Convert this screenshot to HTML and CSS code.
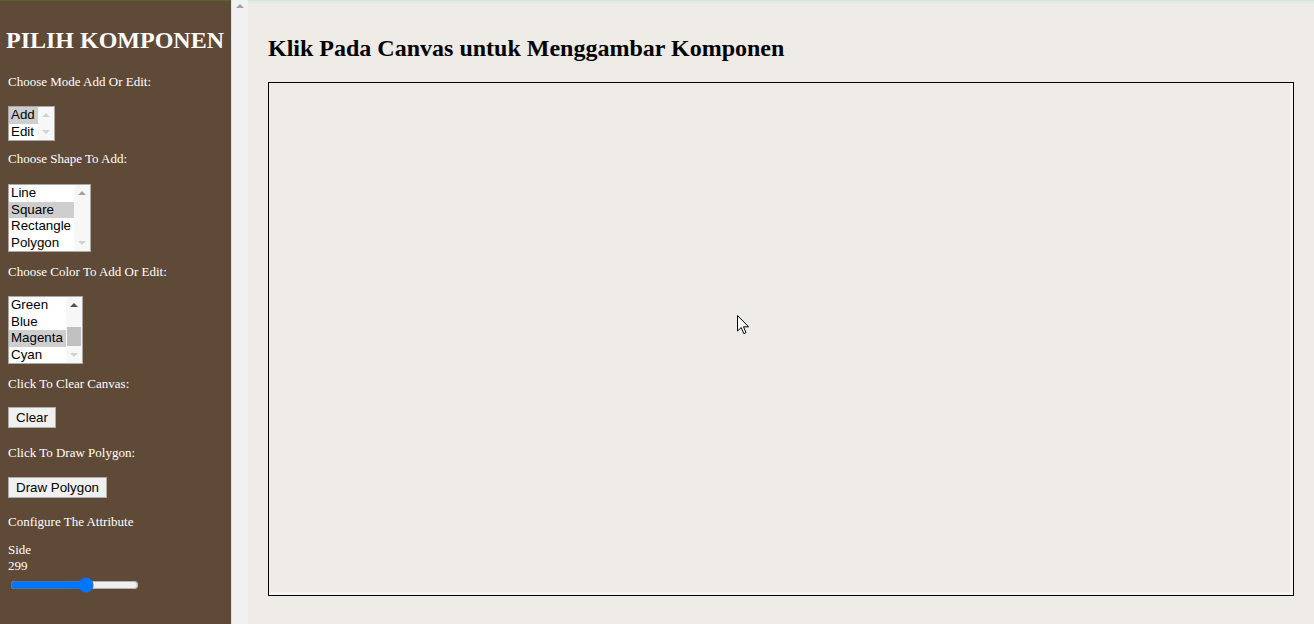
FILE: index.html
```html
<!DOCTYPE html>
<html lang="id">
<head>
<meta charset="utf-8">
<title>Pilih Komponen</title>
<link rel="stylesheet" href="styles.css">
</head>
<body>
<aside class="sidebar">
  <h2 class="title">PILIH KOMPONEN</h2>

  <p class="lbl mt20">Choose Mode Add Or Edit:</p>
  <div class="listbox lb-mode mt17" role="listbox">
    <div class="opts">
      <div class="opt sel">Add</div>
      <div class="opt">Edit</div>
    </div>
    <div class="sbar">
      <span class="arr up dis"></span>
      <span class="track"></span>
      <span class="arr down dis"></span>
    </div>
  </div>

  <p class="lbl mt10">Choose Shape To Add:</p>
  <div class="listbox lb-shape mt18" role="listbox">
    <div class="opts">
      <div class="opt">Line</div>
      <div class="opt sel">Square</div>
      <div class="opt">Rectangle</div>
      <div class="opt">Polygon</div>
    </div>
    <div class="sbar">
      <span class="arr up mid"></span>
      <span class="track"></span>
      <span class="arr down dis"></span>
    </div>
  </div>

  <p class="lbl mt12">Choose Color To Add Or Edit:</p>
  <div class="listbox lb-color mt17" role="listbox">
    <div class="opts">
      <div class="opt">Green</div>
      <div class="opt">Blue</div>
      <div class="opt sel">Magenta</div>
      <div class="opt">Cyan</div>
    </div>
    <div class="sbar">
      <span class="arr up dark"></span>
      <span class="track"><span class="thumb"></span></span>
      <span class="arr down dis"></span>
    </div>
  </div>

  <p class="lbl mt12">Click To Clear Canvas:</p>
  <button class="btn btn-clear mt16">Clear</button>

  <p class="lbl mt17">Click To Draw Polygon:</p>
  <button class="btn btn-poly mt17">Draw Polygon</button>

  <p class="lbl mt16">Configure The Attribute</p>
  <p class="lbl small mt13">Side</p>
  <p class="lbl small">299</p>
  <input class="range" type="range" min="0" max="500" value="299">
</aside>

<div class="vscroll"><span class="vs-up"></span></div>

<main class="main">
  <h2 class="heading">Klik Pada Canvas untuk Menggambar Komponen</h2>
  <canvas class="board" width="1024" height="512"></canvas>
  <svg class="cursor" width="13" height="20" viewBox="0 0 13 20">
    <path d="M0.5 0.5 L0.5 16 L4.2 12.5 L6.8 18.6 L9 17.6 L6.5 11.8 L11.6 11.8 Z" fill="#fff" stroke="#000" stroke-width="1" stroke-linejoin="miter"/>
  </svg>
</main>
</body>
</html>
```

FILE: styles.css
```css
* { box-sizing: border-box; }

html, body {
  margin: 0;
  padding: 0;
  height: 100%;
  overflow: hidden;
}

body {
  display: flex;
  width: 1314px;
  height: 624px;
  font-family: "Liberation Serif", "Times New Roman", serif;
  background: #eeeae6;
}

/* ---------- sidebar ---------- */
.sidebar {
  width: 231px;
  flex: none;
  height: 624px;
  background: #5f4a37;
  border-top: 1px solid #4d6b22;
  padding: 25px 0 0 8px;
  display: flex;
  flex-direction: column;
  align-items: flex-start;
  color: #fff;
}

.title {
  margin: 0 0 0 -9px;
  align-self: stretch;
  text-align: center;
  font-size: 24px;
  line-height: 28px;
  font-weight: bold;
  color: #fff;
  white-space: nowrap;
}

.lbl {
  margin: 0;
  font-size: 13px;
  line-height: 15px;
  color: #fff;
  white-space: nowrap;
}
.lbl.small { line-height: 16px; }

.mt10 { margin-top: 10px; }
.mt12 { margin-top: 12px; }
.mt13 { margin-top: 13px; }
.mt16 { margin-top: 16px; }
.mt17 { margin-top: 17px; }
.mt18 { margin-top: 18px; }
.mt20 { margin-top: 20px; }

/* ---------- listboxes ---------- */
.listbox {
  display: flex;
  background: #fff;
  border: 1px solid #a9a9a9;
  font-family: "Liberation Sans", Arial, sans-serif;
  font-size: 13.33px;
  color: #000;
  overflow: hidden;
}
.lb-mode  { width: 47px; height: 35px; }
.lb-shape { width: 83px; height: 68px; }
.lb-color { width: 75px; height: 68px; }

.opts {
  flex: 1;
  display: flex;
  flex-direction: column;
  min-width: 0;
}
.opt {
  height: 17px;
  line-height: 16px;
  padding: 0 2px;
  white-space: nowrap;
}
.opt.sel { background: #cecece; }

.sbar {
  width: 16px;
  flex: none;
  display: flex;
  flex-direction: column;
  align-items: center;
  background: #f7f7f7;
}
.arr {
  display: block;
  width: 0;
  height: 0;
  border-left: 4px solid transparent;
  border-right: 4px solid transparent;
  margin: 6px 0;
}
.arr.up   { border-bottom: 4px solid #c8c8c8; }
.arr.down { border-top: 4px solid #c8c8c8; }
.arr.up.mid  { border-bottom-color: #a3a3a3; }
.arr.up.dark { border-bottom-color: #505050; }
.arr.dis { opacity: 0.8; }
.track {
  flex: 1;
  width: 100%;
  position: relative;
}
.thumb {
  position: absolute;
  left: 1px;
  right: 1px;
  top: 14px;
  height: 19px;
  background: #c1c1c1;
}

/* ---------- buttons ---------- */
.btn {
  height: 21px;
  margin-left: 0;
  padding: 0;
  font-family: "Liberation Sans", Arial, sans-serif;
  font-size: 13.33px;
  color: #000;
  background: #f0f0f0;
  border: 1px solid #adadad;
  border-radius: 0;
  text-align: center;
}
.btn-clear { width: 48px; }
.btn-poly  { width: 99px; }

/* ---------- range ---------- */
.range {
  margin: 3px 0 0 2px;
  width: 129px;
  height: 16px;
  accent-color: #0075ff;
}

/* ---------- fake scrollbar strip ---------- */
.vscroll {
  width: 17px;
  flex: none;
  height: 624px;
  background: #f1f1f1;
  border-left: 1px solid #e2e2e2;
  display: flex;
  justify-content: center;
}
.vs-up {
  margin-top: 4px;
  width: 0;
  height: 0;
  border-left: 4px solid transparent;
  border-right: 4px solid transparent;
  border-bottom: 4px solid #a3a3a3;
}

/* ---------- main ---------- */
.main {
  flex: 1;
  height: 624px;
  position: relative;
  padding: 33px 20px 0 20px;
  border-top: 1px solid #c9efbd;
  background: linear-gradient(#e7e5f3 0, #e7e5f3 2px, #eeeae6 2px);
}

.heading {
  margin: 0 0 20px 0;
  font-size: 24px;
  line-height: 28px;
  font-weight: bold;
  color: #000;
  white-space: nowrap;
}

.board {
  display: block;
  width: 1026px;
  height: 514px;
  border: 1px solid #000;
  background: #eeeae6;
  box-shadow: inset -3px -3px 0 #f6f4f2;
}

.cursor {
  position: absolute;
  left: 489px;
  top: 314px;
}
```
